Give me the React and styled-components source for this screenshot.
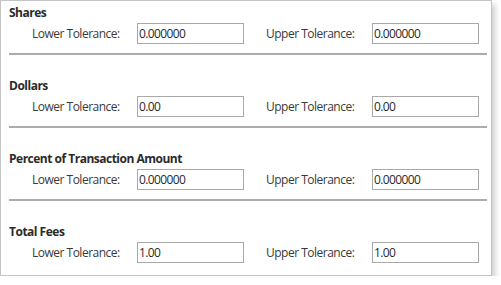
import styled, { createGlobalStyle } from "styled-components";

const GlobalStyle = createGlobalStyle`
  html, body {
    margin: 0;
    padding: 0;
    background: #ffffff;
  }
  body {
    font-family: "Open Sans", "Noto Sans", sans-serif;
  }
`;

const Panel = styled.div`
  box-sizing: border-box;
  width: 492px;
  height: 276px;
  border: 1px solid #c4c4c4;
  background: #ffffff;
  box-shadow: 3px 4px 6px rgba(0, 0, 0, 0.2);
  padding: 4px 4px 0 8px;
`;

const Section = styled.section`
  padding-bottom: 9px;
  margin-bottom: 23px;
  border-bottom: ${(props) => (props.last ? "none" : "2px solid #acacac")};
`;

const Heading = styled.div`
  font-size: 12px;
  line-height: 16px;
  font-weight: 700;
  color: #2b2b2b;
  margin-bottom: 2px;
  letter-spacing: -0.5px;
`;

const Row = styled.div`
  display: flex;
  align-items: center;
  padding-left: 23px;
`;

const Field = styled.label`
  display: flex;
  align-items: center;
  margin-left: ${(props) => props.offset || 0}px;
`;

const Label = styled.span`
  width: ${(props) => props.width}px;
  font-size: 12px;
  color: #3a3a3a;
  letter-spacing: -0.5px;
`;

const Input = styled.input`
  box-sizing: border-box;
  width: 107px;
  height: 21px;
  border: 1px solid #a9a9a9;
  padding: 0 1px;
  font-family: "Open Sans", "Noto Sans", sans-serif;
  font-size: 12px;
  color: #2a2a2a;
  letter-spacing: -0.6px;
  background: #ffffff;
  outline: none;
`;

const groups = [
  { title: "Shares", lower: "0.000000", upper: "0.000000" },
  { title: "Dollars", lower: "0.00", upper: "0.00" },
  { title: "Percent of Transaction Amount", lower: "0.000000", upper: "0.000000" },
  { title: "Total Fees", lower: "1.00", upper: "1.00" },
];

function ToleranceGroup({ group, last }) {
  return (
    <Section last={last}>
      <Heading>{group.title}</Heading>
      <Row>
        <Field>
          <Label width={105}>Lower Tolerance:</Label>
          <Input defaultValue={group.lower} />
        </Field>
        <Field offset={22}>
          <Label width={106}>Upper Tolerance:</Label>
          <Input defaultValue={group.upper} />
        </Field>
      </Row>
    </Section>
  );
}

export default function App() {
  return (
    <>
      <GlobalStyle />
      <Panel>
        {groups.map((g, i) => (
          <ToleranceGroup key={g.title} group={g} last={i === groups.length - 1} />
        ))}
      </Panel>
    </>
  );
}
